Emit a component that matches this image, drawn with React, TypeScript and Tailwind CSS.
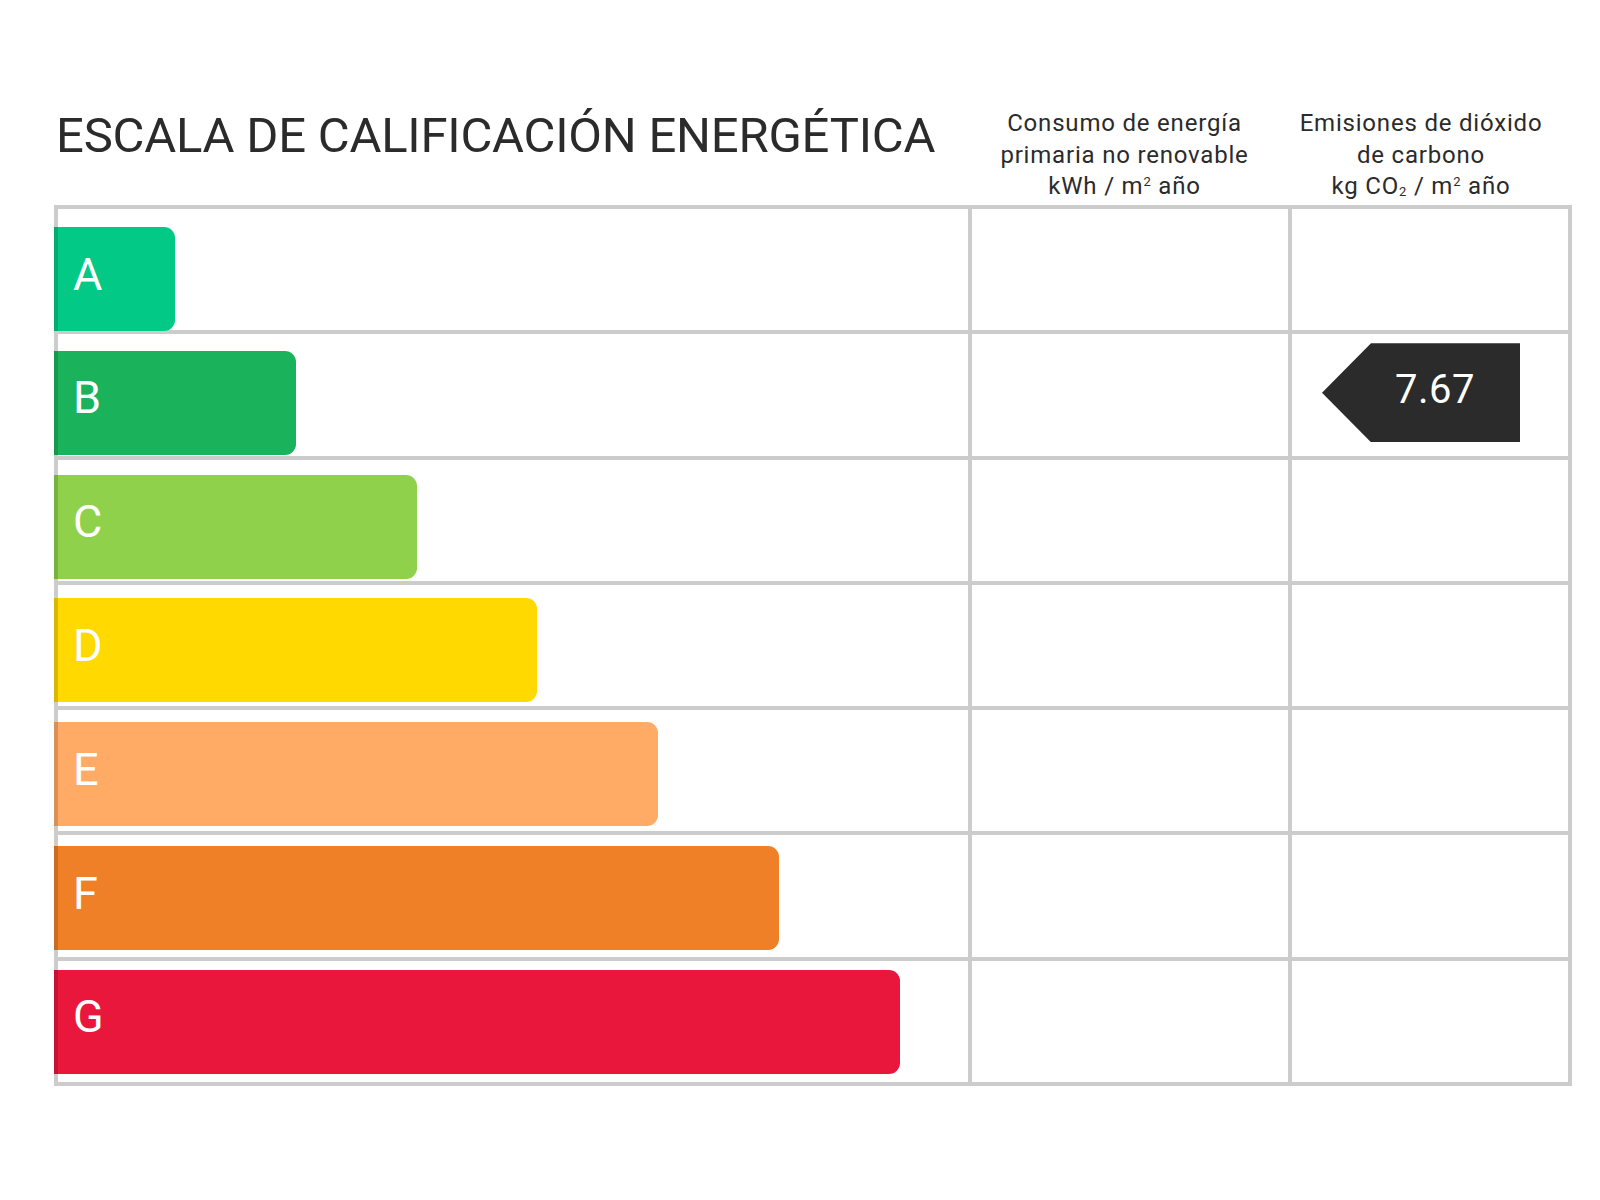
import React from "react";

const bars = [
  { l: "A", w: "w-[121px]", bg: "bg-[#02c986]" },
  { l: "B", w: "w-[242px]", bg: "bg-[#1ab35b]" },
  { l: "C", w: "w-[363px]", bg: "bg-[#8fd14a]" },
  { l: "D", w: "w-[483px]", bg: "bg-[#ffd900]" },
  { l: "E", w: "w-[604px]", bg: "bg-[#ffab66]" },
  { l: "F", w: "w-[725px]", bg: "bg-[#ef8027]" },
  { l: "G", w: "w-[846px]", bg: "bg-[#ea173d]" },
];

export default function App() {
  const rows = [0, 1, 2, 3, 4, 5, 6];
  return (
    <div className="w-[1600px] h-[1200px] bg-white font-['Roboto','Liberation_Sans',sans-serif] text-[#2b2b2b]">
      <div className="pt-[108px] pl-[54px]">
        <div className="flex h-[97px] w-[1518px]">
          <div className="w-[914px] pt-[3px] pl-[2px]">
            <h1 className="text-[49px] leading-none font-normal tracking-[-0.22px] whitespace-nowrap">
              ESCALA DE CALIFICACIÓN ENERGÉTICA
            </h1>
          </div>
          <div className="w-[320px] pr-[7px] text-center text-[24px] leading-[31.5px] tracking-[0.8px] whitespace-nowrap">
            <div>Consumo de energía</div>
            <div>primaria no renovable</div>
            <div>
              kWh / m<span className="text-[13px] leading-none align-[8px]">2</span> año
            </div>
          </div>
          <div className="w-[284px] pr-[18px] text-center text-[24px] leading-[31.5px] tracking-[0.8px] whitespace-nowrap">
            <div>Emisiones de dióxido</div>
            <div>de carbono</div>
            <div>
              kg CO<span className="text-[13px] leading-none align-[-2px]">2</span> / m
              <span className="text-[13px] leading-none align-[8px]">2</span> año
            </div>
          </div>
        </div>

        <div className="relative w-[1518px] h-[881px]">
          <div className="grid h-full grid-cols-[910px_316px_276px] grid-rows-[repeat(7,minmax(0,1fr))] gap-[4px] p-[4px] bg-[#cccccc]">
            {rows.map((r) => (
              <React.Fragment key={r}>
                <div className="bg-white" />
                <div className="bg-white" />
                <div className="bg-white">
                  {r === 1 && (
                    <div className="pt-[9px] pl-[30px]">
                      <div className="flex h-[99px] w-[198px] items-center bg-[#2b2b2b] pl-[73px] pb-[6px] text-[40px] leading-none tracking-[0.5px] text-white [clip-path:polygon(0_50%,49px_0,100%_0,100%_100%,49px_100%)]">
                        7.67
                      </div>
                    </div>
                  )}
                </div>
              </React.Fragment>
            ))}
          </div>

          <div className="absolute left-0 top-[22px] flex flex-col gap-[19.83px]">
            {bars.map((b) => (
              <div
                key={b.l}
                className={`${b.w} ${b.bg} flex h-[104px] items-center rounded-r-[11px] border-l-4 border-black/15 pl-[15px] pb-[10px] text-[45px] leading-none text-white`}
              >
                {b.l}
              </div>
            ))}
          </div>
        </div>
      </div>
    </div>
  );
}
